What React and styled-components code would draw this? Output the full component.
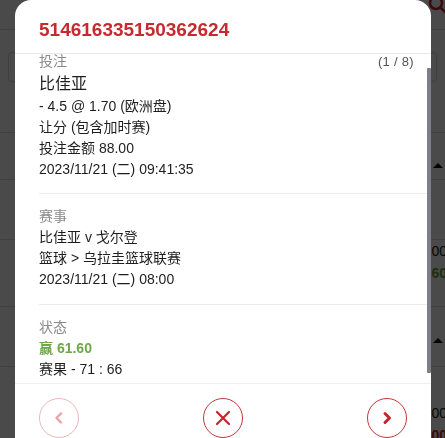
import React, { useLayoutEffect, useRef, useState } from 'react'
import styled, { createGlobalStyle } from 'styled-components';

const GlobalStyle = createGlobalStyle`
    html, body {
        margin: 0;
        padding: 0;
        overflow: hidden;
        background: #f2f2f2;
        font-family: "Liberation Sans", "Noto Sans CJK SC", sans-serif;
    }
    * { box-sizing: border-box; }
`;

const bet = {
    id: '514616335150362624',
    index: 1,
    total: 8,
    selection: '比佳亚',
    lines: ['- 4.5 @ 1.70 (欧洲盘)', '让分 (包含加时赛)', '投注金额 88.00', '2023/11/21 (二) 09:41:35'],
    event: ['比佳亚 v 戈尔登', '篮球 > 乌拉圭篮球联赛', '2023/11/21 (二) 08:00'],
    result: '赢 61.60',
    score: '赛果 - 71 : 66',
};

// rows of the list page that sits behind the dialog
const rows = [
    { h: 47, top: 30, arrow: true },
    { h: 60, top: 0 },
    { h: 67, top: 0, amount: '88.00', win: '61.60' },
    { h: 60, top: 31, arrow: true },
    { h: 80, top: 35, amount: '88.00', loss: '88.00' },
];

function BackPage() {
    return (
        <PageStyled>
            <TopBar>
                <SearchIcon width="22" height="22" viewBox="0 0 22 22">
                    <circle cx="9" cy="5" r="6" fill="none" stroke="#c3262b" strokeWidth="2.5" />
                    <path d="M13.5 9.5 L19 15" stroke="#c3262b" strokeWidth="2.5" />
                </SearchIcon>
            </TopBar>
            <FilterArea>
                <FilterBox />
            </FilterArea>
            {rows.map((row, i) => (
                <ListRow key={i} $h={row.h} $top={row.top}>
                    {row.arrow && <RowArrow />}
                    {row.amount && (
                        <RowAmounts>
                            <span>{row.amount}</span>
                            {row.win && <WinText>{row.win}</WinText>}
                            {row.loss && <LossText>{row.loss}</LossText>}
                        </RowAmounts>
                    )}
                </ListRow>
            ))}
        </PageStyled>
    )
}

function BetDialog() {
    const bodyRef = useRef(null);
    const [thumb, setThumb] = useState({ top: 0, height: 0 });

    useLayoutEffect(() => {
        const el = bodyRef.current;
        if (!el) return;
        el.scrollTop = 15;
        const ratio = el.clientHeight / el.scrollHeight;
        setThumb({ top: el.scrollTop * ratio, height: el.clientHeight * ratio });
    }, []);

    return (
        <Overlay>
            <Dialog>
                <DialogHeader>
                    <Title>{bet.id}</Title>
                </DialogHeader>
                <BodyWrap>
                    <DialogBody ref={bodyRef}>
                        <Section $pb={13}>
                            <LabelRow>
                                <Label>投注</Label>
                                <Counter>({bet.index} / {bet.total})</Counter>
                            </LabelRow>
                            <Selection>{bet.selection}</Selection>
                            {bet.lines.map((line) => <Line key={line}>{line}</Line>)}
                        </Section>
                        <Section>
                            <Label>赛事</Label>
                            {bet.event.map((line) => <Line key={line}>{line}</Line>)}
                        </Section>
                        <Section $last>
                            <Label>状态</Label>
                            <Line $win>{bet.result}</Line>
                            <Line>{bet.score}</Line>
                        </Section>
                    </DialogBody>
                    <ScrollThumb style={{ top: thumb.top, height: thumb.height }} />
                </BodyWrap>
                <DialogFooter>
                    <CircleButton $disabled>
                        <svg width="12" height="14" viewBox="0 0 12 14">
                            <path d="M8 2.5 L3.5 7 L8 11.5" fill="none" stroke="#e9a3a6" strokeWidth="2.4" strokeLinecap="round" strokeLinejoin="round" />
                        </svg>
                    </CircleButton>
                    <CircleButton>
                        <svg width="18" height="18" viewBox="0 0 18 18">
                            <path d="M3 3 L15 15 M15 3 L3 15" stroke="#c3262b" strokeWidth="2.2" strokeLinecap="round" />
                        </svg>
                    </CircleButton>
                    <CircleButton>
                        <svg width="12" height="14" viewBox="0 0 12 14">
                            <path d="M4 2.5 L8.5 7 L4 11.5" fill="none" stroke="#c3262b" strokeWidth="3" strokeLinecap="round" strokeLinejoin="round" />
                        </svg>
                    </CircleButton>
                </DialogFooter>
            </Dialog>
        </Overlay>
    )
}

function App() {
    return (
        <>
            <GlobalStyle />
            <BackPage />
            <BetDialog />
        </>
    )
}

const PageStyled = styled.div`
    width: 100%;
    min-height: 438px;
    background: #f2f2f2;
`;

const TopBar = styled.div`
    height: 30px;
    background: #ffffff;
    border-bottom: 1px solid #dcdcdc;
    display: flex;
    justify-content: flex-end;
    align-items: flex-start;
`;

const SearchIcon = styled.svg`
    margin-top: -2px;
    margin-right: -4px;
`;

const FilterArea = styled.div`
    height: 103px;
    background: #ffffff;
    padding: 22px 8px 0;
    border-bottom: 1px solid #dcdcdc;
`;

const FilterBox = styled.div`
    height: 30px;
    border: 1px solid #d8d8d8;
    border-radius: 4px;
`;

const ListRow = styled.div`
    height: ${(p) => p.$h}px;
    background: #ffffff;
    border-bottom: 1px solid #dcdcdc;
    display: flex;
    justify-content: flex-end;
    align-items: flex-start;
    padding: ${(p) => p.$top}px 2px 0 0;
`;

const RowArrow = styled.div`
    width: 0;
    height: 0;
    border-left: 5px solid transparent;
    border-right: 5px solid transparent;
    border-bottom: 5px solid #111;
`;

const RowAmounts = styled.div`
    display: flex;
    flex-direction: column;
    align-items: flex-end;
    font-size: 14px;
    line-height: 22px;
    color: #222;
    margin-right: -4px;
`;

const WinText = styled.span`
    color: #6c9f3e;
    font-weight: bold;
`;

const LossText = styled.span`
    color: #c3262b;
    font-weight: bold;
`;

const Overlay = styled.div`
    position: fixed;
    inset: 0;
    background: rgba(0, 0, 0, 0.71);
`;

const Dialog = styled.div`
    position: absolute;
    top: 0;
    left: 15px;
    width: 416px;
    height: 470px;
    background: #ffffff;
    border-radius: 16px 16px 0 0;
    display: flex;
    flex-direction: column;
    overflow: hidden;
`;

const DialogHeader = styled.div`
    height: 54px;
    flex-shrink: 0;
    display: flex;
    align-items: center;
    padding: 5px 24px 0;
    border-bottom: 1.5px solid #e9e9e9;
`;

const Title = styled.h2`
    margin: 0;
    font-size: 19px;
    font-weight: bold;
    color: #c62a2f;
    line-height: 1;
`;

const BodyWrap = styled.div`
    position: relative;
    height: 329px;
    flex-shrink: 0;
`;

const DialogBody = styled.div`
    height: 100%;
    overflow-y: auto;
    scrollbar-width: none;
    &::-webkit-scrollbar {
        display: none;
    }
`;

const ScrollThumb = styled.div`
    position: absolute;
    right: 0;
    width: 4px;
    background: #7c7f87;
    border-radius: 1px;
`;

const Section = styled.div`
    margin-left: 24px;
    padding: 12px 17px ${(p) => p.$pb || 14}px 0;
    border-bottom: ${(p) => (p.$last ? 'none' : '1.5px solid #ececec')};
`;

const LabelRow = styled.div`
    display: flex;
    justify-content: space-between;
    align-items: center;
`;

const Label = styled.div`
    font-size: 14px;
    line-height: 21px;
    color: #8a8a8a;
`;

const Counter = styled.span`
    font-size: 13px;
    color: #555;
    letter-spacing: 0.3px;
`;

const Selection = styled.div`
    font-size: 16px;
    line-height: 24px;
    color: #1e1e1e;
`;

const Line = styled.div`
    font-size: 14px;
    line-height: 21px;
    color: ${(p) => (p.$win ? '#70a74c' : '#1e1e1e')};
    font-weight: ${(p) => (p.$win ? 'bold' : 'normal')};
`;

const DialogFooter = styled.div`
    flex-shrink: 0;
    border-top: 1.5px solid #efefef;
    padding: 14px 24px;
    display: flex;
    justify-content: space-between;
`;

const CircleButton = styled.button`
    width: 40px;
    height: 40px;
    border-radius: 50%;
    background: #ffffff;
    border: 1px solid ${(p) => (p.$disabled ? '#eab8ba' : '#c3363a')};
    padding: 0;
    display: flex;
    align-items: center;
    justify-content: center;
    cursor: pointer;
`;

export default App;
